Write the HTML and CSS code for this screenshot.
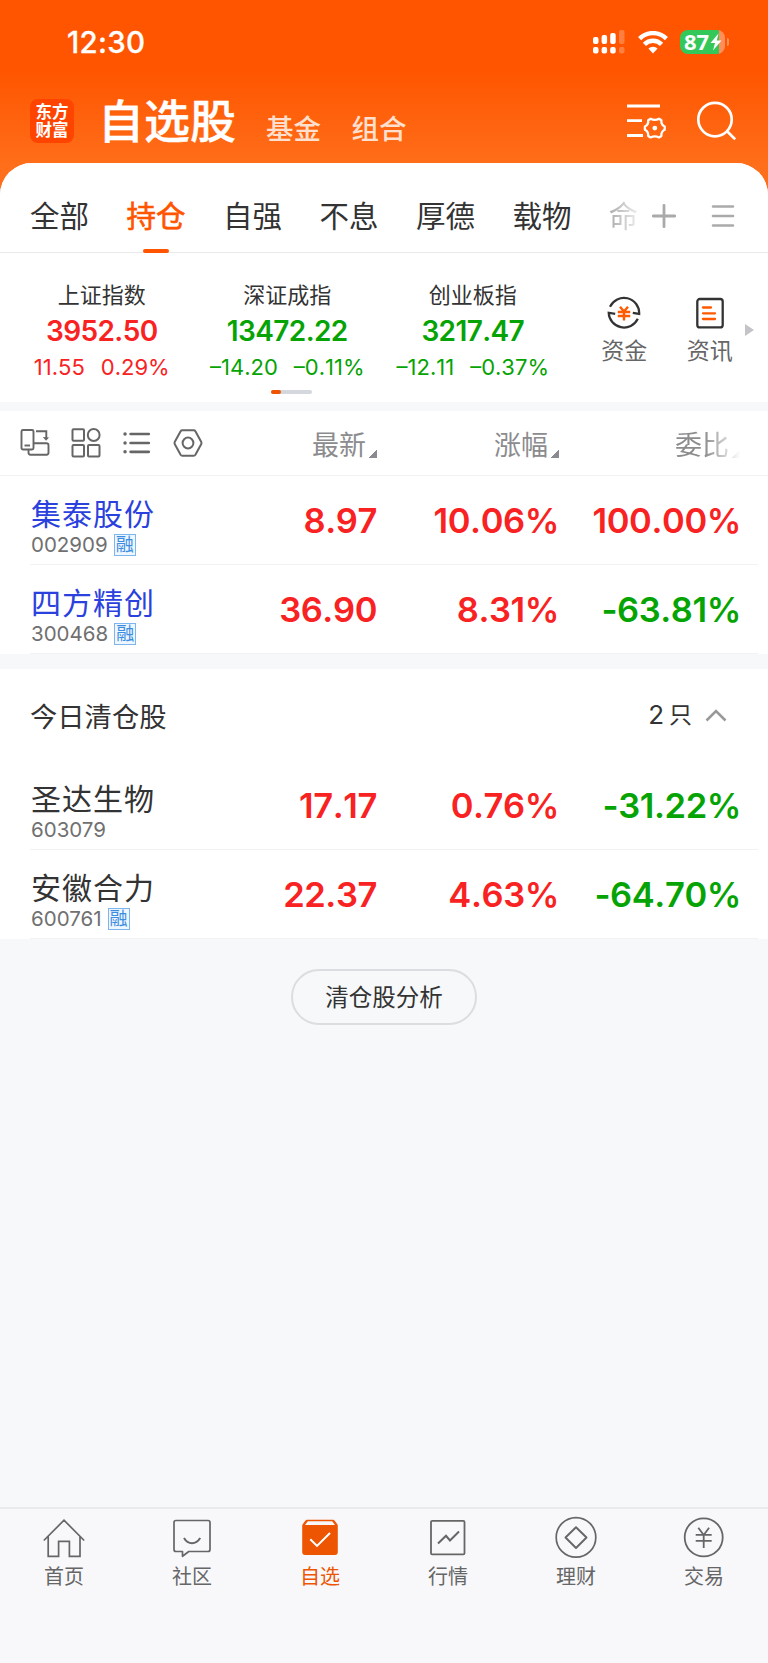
FILE: index.html
```html
<!DOCTYPE html>
<html lang="zh-CN">
<head>
    <meta charset="UTF-8">
    <meta name="viewport" content="width=device-width, initial-scale=1.0">
    <title>自选股</title>
    <link rel="stylesheet" href="styles.css">
</head>
<body>
    <div class="app">
        <header class="header">
            <div class="status-bar">
                <span class="time">12:30</span>
                <div class="status-icons">
                    <svg class="signal" width="32" height="24" viewBox="0 0 32 24" fill="#fff">
                        <rect x="0" y="7" width="5.5" height="7" rx="2"/>
                        <rect x="8.6" y="5" width="5.5" height="9" rx="2"/>
                        <rect x="17.2" y="3" width="5.5" height="11" rx="2"/>
                        <rect x="26" y="0" width="5.5" height="14" rx="2" opacity=".25"/>
                        <rect x="0" y="17" width="5.5" height="6.5" rx="2"/>
                        <rect x="8.6" y="17" width="5.5" height="6.5" rx="2"/>
                        <rect x="17.2" y="17" width="5.5" height="6.5" rx="2"/>
                        <rect x="26" y="17" width="5.5" height="6.5" rx="2" opacity=".25"/>
                    </svg>
                    <svg class="wifi" width="30" height="23" viewBox="0 0 30 23" fill="none" stroke="#fff" stroke-width="4.4">
                        <path d="M1.6 7.6 A19 19 0 0 1 28.4 7.6"/>
                        <path d="M6.4 13.4 A12 12 0 0 1 23.6 13.4"/>
                        <path d="M10.4 17.6 A6.5 6.5 0 0 1 19.6 17.6 L15 22.4 Z" fill="#fff" stroke="none"/>
                    </svg>
                    <div class="battery">
                        <span class="battery-text">87</span>
                        <svg width="12" height="18" viewBox="0 0 12 18" fill="#fff"><path d="M8.5 0.5 L0.5 10 H5 L3 17.5 L11.5 7.5 H6.8 Z"/></svg>
                    </div>
                    <span class="battery-cap"></span>
                </div>
            </div>
            <div class="title-bar">
                <div class="logo"><span>东方</span><span>财富</span></div>
                <h1 class="title">自选股</h1>
                <span class="title-link">基金</span>
                <span class="title-link">组合</span>
                <svg class="icon-manage" width="40" height="36" viewBox="0 0 40 36" fill="none" stroke="#fff" stroke-width="2.8">
                    <path d="M1 3H34M1 17.7H16M1 32.5H17"/>
                    <path stroke-width="2.3" stroke-linejoin="round" d="M24.6 15.8 Q28.8 18 33 15.8 L35.4 17.3 Q35 21.6 38.7 23.6 V26.8 Q35 28.6 35.4 32.9 L33 34.4 Q28.8 32.2 24.6 34.4 L22.2 32.9 Q22.6 28.6 18.9 26.8 V23.6 Q22.6 21.6 22.2 17.3 Z"/>
                    <circle cx="28.8" cy="25.1" r="2.4" fill="#fff" stroke="none"/>
                </svg>
                <svg class="icon-search" width="40" height="40" viewBox="0 0 40 40" fill="none" stroke="#fff" stroke-width="2.7">
                    <circle cx="19" cy="18.6" r="16.7"/>
                    <path d="M30.6 29.8L39.2 38.4"/>
                </svg>
            </div>
        </header>

        <main class="panel">
            <nav class="tabs">
                <span class="tab">全部</span>
                <span class="tab active">持仓</span>
                <span class="tab">自强</span>
                <span class="tab">不息</span>
                <span class="tab">厚德</span>
                <span class="tab">载物</span>
                <span class="tab faded">命</span>
                <svg class="icon-plus" width="24" height="24" viewBox="0 0 24 24" stroke="#aaa" stroke-width="2.8" stroke-linecap="round"><path d="M1.3 12H22.7M12 1.3V22.7"/></svg>
                <svg class="icon-menu" width="24" height="24" viewBox="0 0 24 24" stroke="#aaa" stroke-width="2.6" stroke-linecap="round"><path d="M2 2.5H22M2 12H22M2 21.5H22"/></svg>
            </nav>

            <section class="indexes">
                <div class="index up">
                    <span class="index-name">上证指数</span>
                    <span class="index-value">3952.50</span>
                    <div class="index-change"><span>11.55</span><span>0.29%</span></div>
                </div>
                <div class="index down">
                    <span class="index-name">深证成指</span>
                    <span class="index-value">13472.22</span>
                    <div class="index-change"><span>–14.20</span><span>–0.11%</span></div>
                </div>
                <div class="index down">
                    <span class="index-name">创业板指</span>
                    <span class="index-value">3217.47</span>
                    <div class="index-change"><span>–12.11</span><span>–0.37%</span></div>
                </div>
                <div class="shortcuts">
                    <div class="shortcut">
                        <svg width="34" height="34" viewBox="0 0 34 34" fill="none" stroke="#333" stroke-width="2.2">
                            <path d="M3 10.8 A15.3 15.3 0 0 1 32.2 17.9 L25.8 16.8"/>
                            <path d="M30.8 22.8 A15.3 15.3 0 0 1 1.7 16.7 L8.2 17.8"/>
                            <path stroke="#ff5a00" stroke-width="2.4" d="M13 10.8L17 15.5L21 10.8M10.8 16H23.2M10.8 20H23.2M17 15V24.5"/>
                        </svg>
                        <span>资金</span>
                    </div>
                    <div class="shortcut">
                        <svg width="34" height="34" viewBox="0 0 34 34" fill="none" stroke="#333" stroke-width="2.3">
                            <rect x="4.3" y="3" width="25.4" height="28.4" rx="2.5"/>
                            <path stroke="#ff5a00" stroke-linecap="round" d="M10 11.5H18M10 17.3H22M10 23H22"/>
                        </svg>
                        <span>资讯</span>
                    </div>
                </div>
                <span class="arrow-right"></span>
                <div class="pager"><span></span></div>
            </section>

            <section class="stocks">
                <div class="table-head">
                    <div class="tools">
                        <svg width="30" height="30" viewBox="0 0 30 30" fill="none" stroke="#666" stroke-width="1.9">
                            <rect x="1.5" y="2" width="12" height="19.5" rx="1.5"/>
                            <path d="M4.5 17.5H10"/>
                            <path d="M16 3.2H26.3V11"/>
                            <path fill="#666" stroke="none" d="M22.8 9L29 9.4L26 12.8Z"/>
                            <path d="M13.5 15.3H26.5Q28.5 15.3 28.5 17.3V24.5Q28.5 26.7 26.5 26.7H10.5Q8.5 26.7 8.5 24.5V22"/>
                        </svg>
                        <svg width="30" height="30" viewBox="0 0 30 30" fill="none" stroke="#666" stroke-width="2">
                            <rect x="1.5" y="1.2" width="11.5" height="11.5" rx="1"/>
                            <circle cx="22.7" cy="7" r="5.9"/>
                            <rect x="1.5" y="16.9" width="11.5" height="11.5" rx="1"/>
                            <rect x="17" y="16.9" width="11.5" height="11.5" rx="1"/>
                        </svg>
                        <svg width="30" height="30" viewBox="0 0 30 30" fill="none" stroke="#666" stroke-width="2.7" stroke-linecap="round">
                            <path d="M8.6 6H26.8M8.6 15H26.8M8.6 23.8H26.8"/>
                            <path stroke-width="3.4" d="M3 6H3.1M3 15H3.1M3 23.8H3.1"/>
                        </svg>
                        <svg width="30" height="30" viewBox="0 0 30 30" fill="none" stroke="#666" stroke-width="2">
                            <path stroke-linejoin="round" d="M9.3 2.2H20.7Q21.8 2.2 22.4 3.2L28.3 14Q28.7 15 28.3 16L22.4 26.8Q21.8 27.8 20.7 27.8H9.3Q8.2 27.8 7.6 26.8L1.7 16Q1.3 15 1.7 14L7.6 3.2Q8.2 2.2 9.3 2.2Z"/>
                            <circle cx="15" cy="15" r="5.4"/>
                        </svg>
                    </div>
                    <span class="col">最新</span>
                    <span class="col">涨幅</span>
                    <span class="col fading">委比</span>
                </div>
                <div class="row">
                    <div class="stock">
                        <span class="name held">集泰股份</span>
                        <span class="code">002909<i class="tag">融</i></span>
                    </div>
                    <span class="num up">8.97</span>
                    <span class="num up">10.06%</span>
                    <span class="num up">100.00%</span>
                </div>
                <div class="row">
                    <div class="stock">
                        <span class="name held">四方精创</span>
                        <span class="code">300468<i class="tag">融</i></span>
                    </div>
                    <span class="num up">36.90</span>
                    <span class="num up">8.31%</span>
                    <span class="num down">-63.81%</span>
                </div>
            </section>

            <section class="cleared">
                <div class="cleared-head">
                    <span>今日清仓股</span>
                    <span class="count">2<b>只</b></span>
                    <svg width="22" height="14" viewBox="0 0 22 14" fill="none" stroke="#999" stroke-width="2.6"><path d="M1.5 12.5L11 3L20.5 12.5"/></svg>
                </div>
                <div class="row">
                    <div class="stock">
                        <span class="name">圣达生物</span>
                        <span class="code">603079</span>
                    </div>
                    <span class="num up">17.17</span>
                    <span class="num up">0.76%</span>
                    <span class="num down">-31.22%</span>
                </div>
                <div class="row">
                    <div class="stock">
                        <span class="name">安徽合力</span>
                        <span class="code">600761<i class="tag">融</i></span>
                    </div>
                    <span class="num up">22.37</span>
                    <span class="num up">4.63%</span>
                    <span class="num down">-64.70%</span>
                </div>
            </section>
        </main>

        <button class="analyze">清仓股分析</button>

        <footer class="tabbar">
            <div class="tabbar-item">
                <svg width="44" height="44" viewBox="0 0 44 44" fill="none" stroke="#666" stroke-width="1.7">
                    <path d="M1.8 24.5L22 4.2L42.2 24.5M6.2 20.5V40.4H16.6V25.3H27.4V40.4H38V20.5"/>
                </svg>
                <span>首页</span>
            </div>
            <div class="tabbar-item">
                <svg width="44" height="44" viewBox="0 0 44 44" fill="none" stroke="#666" stroke-width="1.7" stroke-linejoin="round">
                    <path d="M6 4.5H38Q40 4.5 40 6.5V33.5Q40 35.5 38 35.5H18.8L12.5 40.3V35.5H6Q4 35.5 4 33.5V6.5Q4 4.5 6 4.5Z"/>
                    <path stroke-width="2" d="M14 22Q17 27.2 22 27.2T30.2 22"/>
                </svg>
                <span>社区</span>
            </div>
            <div class="tabbar-item active">
                <svg width="44" height="44" viewBox="0 0 44 44" fill="none">
                    <path fill="#ed5502" d="M9 3.8H35Q36 3.8 36.7 4.7L39.3 8.2Q39.8 9 39.8 10V36Q39.8 39 36.8 39H7.2Q4.2 39 4.2 36V10Q4.2 9 4.7 8.2L7.3 4.7Q8 3.8 9 3.8Z"/>
                    <path fill="#f8f8fb" d="M9.8 5.3H34.2L37 9H7Z"/>
                    <path stroke="#fff" stroke-width="2" d="M12.3 23.2L19 29.9L32 17"/>
                </svg>
                <span>自选</span>
            </div>
            <div class="tabbar-item">
                <svg width="44" height="44" viewBox="0 0 44 44" fill="none" stroke="#666" stroke-width="1.8">
                    <rect x="5" y="4.9" width="33.5" height="33.5" rx="1.2"/>
                    <path stroke-width="2" d="M12 27.5L20 19.8L24 24.5L33 15.5"/>
                </svg>
                <span>行情</span>
            </div>
            <div class="tabbar-item">
                <svg width="44" height="44" viewBox="0 0 44 44" fill="none" stroke="#666" stroke-width="1.7" stroke-linejoin="round">
                    <circle cx="22" cy="21.4" r="19.8"/>
                    <path stroke-width="1.9" d="M22 11.2L32.5 21.5L22 32L11.5 21.5Z"/>
                </svg>
                <span>理财</span>
            </div>
            <div class="tabbar-item">
                <svg width="44" height="44" viewBox="0 0 44 44" fill="none" stroke="#666" stroke-width="1.8">
                    <circle cx="21.7" cy="21.4" r="19"/>
                    <path d="M16.3 11.8L21.7 19L27.1 11.8M13.7 18.8H29.7M13.7 24.8H29.7M21.7 18.8V32"/>
                </svg>
                <span>交易</span>
            </div>
        </footer>
    </div>
</body>
</html>
```

FILE: styles.css
```css
* {
    box-sizing: border-box;
}
body {
    margin: 0;
    padding: 0;
    background-color: #f7f8fa;
    font-family: Inter, "Noto Sans CJK SC", sans-serif;
    color: #333;
}
svg {
    display: block;
    flex: none;
}
.app {
    width: 768px;
    height: 1663px;
    display: flex;
    flex-direction: column;
    background: linear-gradient(#ff5500 0, #ff5500 70px, #ff6e1a 165px, #ff6e1a 210px, #f7f8fa 210px);
    overflow: hidden;
}

/* Header */
.header {
    height: 163px;
    color: #fff;
}
.status-bar {
    height: 84px;
    padding: 0 40px 0 67px;
    display: flex;
    align-items: center;
    justify-content: space-between;
}
.time {
    font-size: 29.5px;
    font-weight: 500;
    letter-spacing: 0.3px;
    -webkit-text-stroke: 0.3px;
}
.status-icons {
    display: flex;
    align-items: center;
}
.wifi {
    margin: 0 12px 0 13px;
}
.battery {
    width: 45px;
    height: 24px;
    border-radius: 8px;
    background: linear-gradient(90deg, #34c759 39px, #ff8f5a 39px);
    display: flex;
    align-items: center;
    padding-left: 4px;
}
.battery-text {
    font: bold 22px/22px "Open Sans", sans-serif;
    padding-bottom: 2px;
    margin-right: 1px;
}
.battery-cap {
    width: 2px;
    height: 8px;
    margin-left: 2px;
    margin-right: -1px;
    border-radius: 0 2px 2px 0;
    background: #ff8f5a;
}
.title-bar {
    height: 74px;
    padding: 0 32px 0 30px;
    display: flex;
    align-items: center;
}
.logo {
    width: 44px;
    height: 44px;
    border-radius: 8px;
    background-color: #ff4400;
    display: flex;
    flex-direction: column;
    align-items: center;
    justify-content: center;
    font-size: 16.5px;
    font-weight: 700;
    line-height: 18.5px;
}
.title {
    margin: 0 30px 1px 24px;
    font-size: 46px;
    font-weight: 500;
    line-height: 60px;
    -webkit-text-stroke: 0.4px;
}
.title-link {
    font-size: 27.5px;
    font-weight: 500;
    line-height: 36px;
    margin: 16px 30.5px 0 0;
    color: #ffe0cf;
}
.icon-manage {
    margin-left: auto;
    margin-right: 30px;
}

/* Group tabs */
.panel {
    border-radius: 32px 32px 0 0;
    background-color: #f7f8fa;
    overflow: hidden;
}
.tabs {
    height: 90px;
    padding: 21px 33px 0 30px;
    background-color: #fff;
    border-bottom: 1px solid #e9eaec;
    display: flex;
    align-items: flex-start;
}
.tab {
    width: 59px;
    margin-right: 37.5px;
    font-size: 29.5px;
    line-height: 65px;
    white-space: nowrap;
    display: flex;
    flex-direction: column;
    align-items: center;
}
.tab.active {
    color: #ff5500;
    -webkit-text-stroke: 0.6px;
}
.tab.active::after {
    content: "";
    width: 26px;
    height: 4px;
    border-radius: 2px;
    background-color: #ff5500;
}
.tab.faded {
    width: 29px;
    margin-right: 14px;
    background: linear-gradient(90deg, #aaa, #eee);
    background-clip: text;
    -webkit-background-clip: text;
    color: transparent;
}
.icon-plus,
.icon-menu {
    margin-top: 20px;
}
.icon-menu {
    margin-left: auto;
}

/* Indexes */
.indexes {
    position: relative;
    height: 149px;
    background-color: #fff;
    display: flex;
    padding-left: 9px;
}
.index {
    width: 185.5px;
    padding-top: 26px;
    display: flex;
    flex-direction: column;
    align-items: center;
    white-space: nowrap;
}
.index-name {
    font-size: 22px;
    line-height: 32px;
    color: #333;
}
.index-value {
    font-size: 28px;
    font-weight: 600;
    line-height: 41px;
    letter-spacing: -0.6px;
    font-kerning: none;
}
.index-change {
    display: flex;
    gap: 16px;
    font-size: 22px;
    line-height: 30px;
    font-kerning: none;
}
.up {
    color: #f92223;
}
.down {
    color: #06a304;
}
.shortcuts {
    display: flex;
    margin-left: 16px;
}
.shortcut {
    width: 85.5px;
    padding-top: 43px;
    display: flex;
    flex-direction: column;
    align-items: center;
    font-size: 23px;
    line-height: 42px;
    color: #666;
}
.arrow-right {
    position: absolute;
    right: 14px;
    top: 71px;
    border: solid transparent;
    border-width: 6px 0 6px 9px;
    border-left-color: #c4c4c8;
}
.pager {
    position: absolute;
    left: 271px;
    top: 137px;
    width: 41px;
    height: 4px;
    border-radius: 2px;
    background-color: #d5d7de;
}
.pager span {
    display: block;
    width: 10px;
    height: 4px;
    border-radius: 2px;
    background-color: #ed5502;
}

/* Stock table */
.stocks {
    margin-top: 9px;
    background-color: #fff;
}
.table-head {
    height: 65px;
    border-bottom: 1px solid #f1f2f4;
    display: grid;
    grid-template-columns: 212px 165px 182px 181px;
    align-items: center;
}
.tools {
    display: flex;
    gap: 21px;
    padding: 0 0 0 20px;
}
.col {
    display: flex;
    justify-content: flex-end;
    align-items: flex-end;
    padding-top: 5px;
    font-size: 27px;
    line-height: 40px;
    color: #8c8c8f;
}
.col::after {
    content: "";
    margin: 0 0 8px 3px;
    width: 8px;
    height: 8px;
    background: linear-gradient(135deg, transparent 50%, #8a8a92 50%);
}
.col.fading {
    -webkit-mask-image: linear-gradient(90deg, #000 calc(100% - 36px), transparent);
    mask-image: linear-gradient(90deg, #000 calc(100% - 36px), transparent);
}
.row {
    position: relative;
    height: 89px;
    display: grid;
    grid-template-columns: 212px 164px 182px 182px;
}
.row::after {
    content: "";
    position: absolute;
    left: 30px;
    right: 10px;
    bottom: 0;
    height: 1px;
    background-color: #f1f2f4;
}
.stock {
    padding: 20px 0 0 31px;
    display: flex;
    flex-direction: column;
}
.name {
    font-size: 30px;
    letter-spacing: 1px;
    line-height: 36px;
}
.name.held {
    color: #2b41dd;
}
.code {
    display: flex;
    align-items: center;
    font-size: 20.5px;
    line-height: 26px;
    color: #707070;
}
.tag {
    width: 22px;
    height: 22px;
    margin-left: 6px;
    border: 1px solid #7db5ee;
    background-color: #eef6ff;
    color: #3c8ce0;
    font-size: 18px;
    font-style: normal;
    line-height: 20px;
    text-align: center;
}
.num {
    font-size: 34.5px;
    font-weight: 600;
    line-height: 90px;
    letter-spacing: -0.4px;
    margin-right: -1px;
    font-kerning: none;
    text-align: right;
}

/* Cleared positions */
.cleared {
    margin-top: 15px;
    background-color: #fff;
}
.cleared-head {
    height: 92px;
    padding: 0 41px 0 30px;
    display: flex;
    align-items: center;
    font-size: 27.3px;
}
.count {
    margin-left: auto;
    margin-right: 13px;
    display: flex;
    align-items: center;
    gap: 5px;
    font-size: 26px;
    line-height: 30px;
}
.count b {
    font-size: 23px;
    font-weight: 400;
    line-height: 26px;
    padding-bottom: 1px;
}
.analyze {
    align-self: center;
    width: 186px;
    height: 56px;
    margin-top: 30px;
    padding-bottom: 3px;
    border: 2px solid #dcdde0;
    border-radius: 28px;
    background: none;
    font: 23.5px "Noto Sans CJK SC", sans-serif;
    color: #333;
}

/* Bottom tab bar */
.tabbar {
    margin-top: auto;
    height: 156px;
    flex: none;
    border-top: 2px solid #e9eaec;
    background-color: #f8f8fb;
    display: flex;
}
.tabbar-item {
    flex: 1;
    padding-top: 7px;
    display: flex;
    flex-direction: column;
    align-items: center;
    font-size: 20px;
    line-height: 34px;
    color: #666;
}
.tabbar-item.active {
    color: #ed5502;
}
```
